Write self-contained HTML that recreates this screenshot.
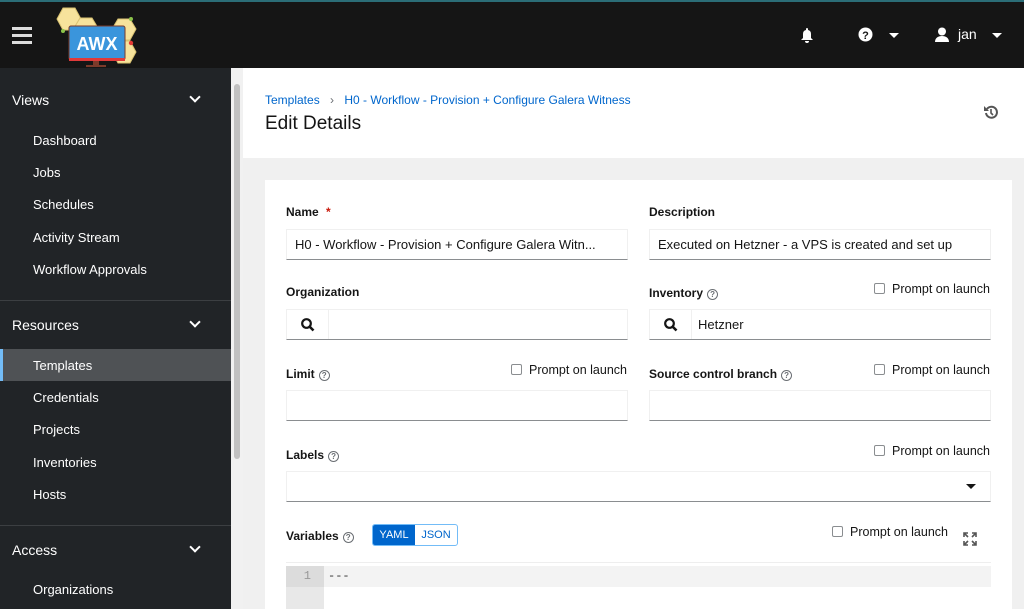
<!DOCTYPE html>
<html><head><meta charset="utf-8"><style>
*{box-sizing:border-box;margin:0;padding:0}
body{width:1024px;height:609px;overflow:hidden;position:relative;font-family:"Liberation Sans",sans-serif;background:#f0f0f0;color:#151515}
.a{position:absolute}
.hdr{left:0;top:0;width:1024px;height:68px;background:#151515;border-top:2px solid #2b6d77}
.side{left:0;top:68px;width:231px;height:541px;background:#212427}
.sb{left:231px;top:68px;width:12px;height:541px;background:#f1f1f1}
.sb div{position:absolute;left:3px;top:16px;width:6px;height:375px;background:#c1c1c1;border-radius:3px}
.sec{color:#fff;font-size:14px;left:12px}
.chev{width:8px;height:8px;border-right:2px solid #fff;border-bottom:2px solid #fff;transform:rotate(45deg);left:191px}
.it{color:#fff;font-size:13px;left:33px}
.div{left:0;width:231px;height:1px;background:#3c3f42}
.lbl{font-size:12px;font-weight:bold;color:#151515}
.inp{background:#fff;border:1px solid #f0f0f0;border-bottom:1px solid #8a8d90;height:31px;font-size:13px;padding:7px 8px;white-space:nowrap;overflow:hidden}
.chk{font-size:12.5px;color:#151515}
.chk i{display:inline-block;width:11px;height:11px;border:1px solid #8a8d90;border-radius:2px;vertical-align:-1px;margin-right:7px}
.q{display:inline-block;width:11px;height:11px;border:1px solid #6a6e73;border-radius:50%;font-size:8px;text-align:center;line-height:9px;font-weight:bold;color:#6a6e73;margin-left:4px;vertical-align:0}
.sq{position:absolute;left:0;top:0;width:42px;height:29px;border-right:1px solid #f0f0f0}
</style></head><body>
<div class="a hdr">
 <svg class="a" style="left:12px;top:25px" width="20" height="18"><rect y="0" width="20" height="3" fill="#ddd"/><rect y="7" width="20" height="3" fill="#ddd"/><rect y="14" width="20" height="3" fill="#ddd"/></svg>
 <svg class="a" style="left:55px;top:2px" width="90" height="64">
  <g fill="#f7e39c" stroke="#d9c271"><polygon points="8,4 20,4 26,15 20,26 8,26 2,15"/><polygon points="25,14 37,14 43,24 37,34 25,34 19,24"/><polygon points="63,15 75,15 81,25 75,36 63,36 57,25"/><polygon points="63,37 75,37 81,48 75,59 63,59 57,48"/></g>
  <circle cx="8" cy="27" r="2" fill="#8bc34a"/><circle cx="76" cy="15" r="2" fill="#8bc34a"/><circle cx="76" cy="39" r="2.2" fill="#e53935"/>
  <rect x="14" y="22" width="56" height="34" rx="2" fill="#3a95dc" stroke="#7a3a2a"/>
  <rect x="14" y="54" width="56" height="3" fill="#e03a3a"/>
  <rect x="38" y="57" width="6" height="4" fill="#7a3a2a"/><rect x="31" y="61" width="20" height="2" fill="#7a3a2a"/>
  <text x="42" y="46" text-anchor="middle" font-family="Liberation Sans" font-weight="bold" font-size="18" fill="#fff">AWX</text>
 </svg>
 <svg class="a" style="left:800px;top:25px" width="14" height="16"><path d="M7 1a1 1 0 0 1 1 1v1a4 4 0 0 1 3 4v4l2 2H1l2-2V7a4 4 0 0 1 3-4V2a1 1 0 0 1 1-1zM5 14h4a2 2 0 0 1-4 0z" fill="#fff"/></svg>
 <svg class="a" style="left:858px;top:25px" width="15" height="15"><circle cx="7.5" cy="7.5" r="7" fill="#fff"/><text x="7.5" y="12" text-anchor="middle" font-size="11" font-weight="bold" fill="#151515" font-family="Liberation Sans">?</text></svg>
 <div class="a" style="left:889px;top:31px;border:5px solid transparent;border-top:5px solid #fff"></div>
 <svg class="a" style="left:935px;top:25px" width="14" height="16"><circle cx="7" cy="4.5" r="4" fill="#fff"/><path d="M0 15c0-4 3-6 7-6s7 2 7 6z" fill="#fff"/></svg>
 <div class="a" style="left:958px;top:24px;color:#fff;font-size:14px">jan</div>
 <div class="a" style="left:992px;top:31px;border:5px solid transparent;border-top:5px solid #fff"></div>
</div>
<div class="a side">
 <div class="a sec" style="top:24px">Views</div><div class="a chev" style="top:25px"></div>
 <div class="a it" style="top:65px">Dashboard</div>
 <div class="a it" style="top:97px">Jobs</div>
 <div class="a it" style="top:129px">Schedules</div>
 <div class="a it" style="top:162px">Activity Stream</div>
 <div class="a it" style="top:194px">Workflow Approvals</div>
 <div class="a div" style="top:232px"></div>
 <div class="a sec" style="top:249px">Resources</div><div class="a chev" style="top:250px"></div>
 <div class="a" style="left:0;top:281px;width:231px;height:32px;background:#4f5255;border-left:3px solid #73bcf7"></div>
 <div class="a it" style="top:290px">Templates</div>
 <div class="a it" style="top:322px">Credentials</div>
 <div class="a it" style="top:354px">Projects</div>
 <div class="a it" style="top:387px">Inventories</div>
 <div class="a it" style="top:419px">Hosts</div>
 <div class="a div" style="top:457px"></div>
 <div class="a sec" style="top:474px">Access</div><div class="a chev" style="top:475px"></div>
 <div class="a it" style="top:514px">Organizations</div>
</div>
<div class="a sb"><div></div></div>
<div class="a" style="left:243px;top:68px;width:781px;height:90px;background:#fff">
 <div class="a" style="left:22px;top:25px;font-size:12px;color:#06c">Templates <span style="color:#6a6e73;margin:0 7px">›</span> H0 - Workflow - Provision + Configure Galera Witness</div>
 <div class="a" style="left:22px;top:45px;font-size:19px;color:#151515">Edit Details</div>
 <svg class="a" style="left:741px;top:37px" width="14" height="14"><path d="M3 4A5.5 5.5 0 1 1 2 8" fill="none" stroke="#555" stroke-width="2"/><path d="M0 1v5h5z" fill="#555"/><path d="M7 4v4l2 2" fill="none" stroke="#555" stroke-width="1.6"/></svg>
</div>
<div class="a" style="left:265px;top:180px;width:747px;height:429px;background:#fff"></div>

<div class="a lbl" style="left:286px;top:205px">Name <span style="color:#c9190b;margin-left:4px">*</span></div>
<div class="a inp" style="left:286px;top:229px;width:342px">H0 - Workflow - Provision + Configure Galera Witn...</div>
<div class="a lbl" style="left:649px;top:205px">Description</div>
<div class="a inp" style="left:649px;top:229px;width:342px">Executed on Hetzner - a VPS is created and set up</div>

<div class="a lbl" style="left:286px;top:285px">Organization</div>
<div class="a inp" style="left:286px;top:309px;width:342px"><div class="sq"></div><svg class="a" style="left:14px;top:8px" width="14" height="14"><circle cx="5.5" cy="5.5" r="4.3" fill="none" stroke="#151515" stroke-width="2.2"/><path d="M8.5 8.5l4 4" stroke="#151515" stroke-width="2.6"/></svg></div>
<div class="a lbl" style="left:649px;top:286px">Inventory<span class="q">?</span></div>
<div class="a chk" style="left:874px;top:282px"><i></i>Prompt on launch</div>
<div class="a inp" style="left:649px;top:309px;width:342px"><div class="sq"></div><svg class="a" style="left:14px;top:8px" width="14" height="14"><circle cx="5.5" cy="5.5" r="4.3" fill="none" stroke="#151515" stroke-width="2.2"/><path d="M8.5 8.5l4 4" stroke="#151515" stroke-width="2.6"/></svg><span style="position:absolute;left:48px;top:7px">Hetzner</span></div>

<div class="a lbl" style="left:286px;top:367px">Limit<span class="q">?</span></div>
<div class="a chk" style="left:511px;top:363px"><i></i>Prompt on launch</div>
<div class="a inp" style="left:286px;top:390px;width:342px"></div>
<div class="a lbl" style="left:649px;top:367px">Source control branch<span class="q">?</span></div>
<div class="a chk" style="left:874px;top:363px"><i></i>Prompt on launch</div>
<div class="a inp" style="left:649px;top:390px;width:342px"></div>

<div class="a lbl" style="left:286px;top:448px">Labels<span class="q">?</span></div>
<div class="a chk" style="left:874px;top:444px"><i></i>Prompt on launch</div>
<div class="a inp" style="left:286px;top:471px;width:705px"><div class="a" style="left:679px;top:12px;border:5px solid transparent;border-top:5px solid #151515"></div></div>

<div class="a lbl" style="left:286px;top:529px">Variables<span class="q">?</span></div>
<div class="a" style="left:372px;top:524px;width:86px;height:22px;border:1px solid #73bcf7;border-radius:3px;font-size:11px;overflow:hidden">
 <div class="a" style="left:0;top:0;width:42px;height:20px;background:#06c;color:#fff;text-align:center;line-height:20px">YAML</div>
 <div class="a" style="left:42px;top:0;width:42px;height:20px;color:#06c;text-align:center;line-height:20px">JSON</div>
</div>
<div class="a chk" style="left:832px;top:525px"><i></i>Prompt on launch</div>
<svg class="a" style="left:963px;top:532px" width="14" height="14" fill="none" stroke="#555" stroke-width="1.6"><path d="M1 5V1h4M1 1l4 4M13 5V1H9M13 1L9 5M1 9v4h4M1 13l4-4M13 9v4H9M13 13L9 9"/></svg>
<div class="a" style="left:286px;top:562px;width:705px;height:47px;background:#fff;border-top:1px solid #eee"></div>
<div class="a" style="left:286px;top:566px;width:38px;height:43px;background:#e8e8e8"></div>
<div class="a" style="left:324px;top:566px;width:667px;height:21px;background:#f3f3f3"></div>
<div class="a" style="left:286px;top:566px;width:38px;height:21px;background:#dcdcdc;color:#999;font-size:12px;font-family:'Liberation Mono',monospace;text-align:right;padding:3px 13px 0 0">1</div>
<div class="a" style="left:328px;top:569px;font-size:12px;font-family:'Liberation Mono',monospace;color:#333">---</div>
</body></html>
